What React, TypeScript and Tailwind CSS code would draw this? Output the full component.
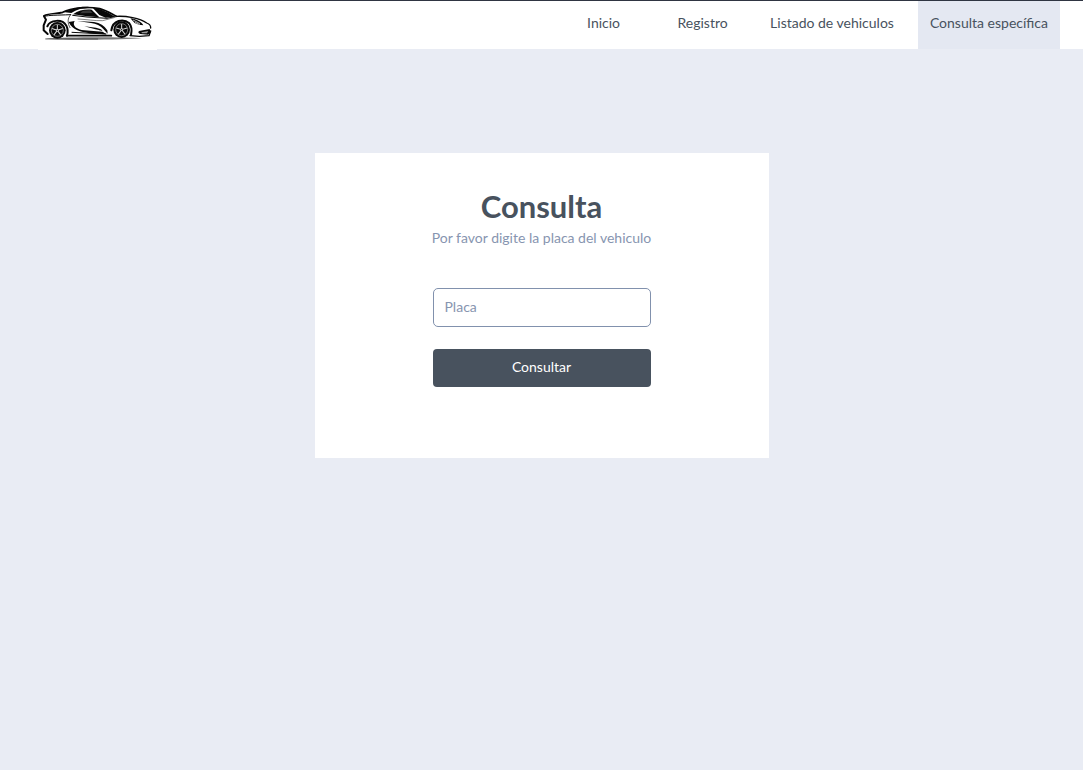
import React from "react";

const links = [
  { label: "Inicio", href: "#inicio" },
  { label: "Registro", href: "#registro" },
  { label: "Listado de vehiculos", href: "#listado" },
  { label: "Consulta específica", href: "#consulta", active: true },
];

function Wheel({ cx, cy }: { cx: number; cy: number }) {
  return (
    <g transform={`translate(${cx} ${cy})`}>
      <circle r="25" fill="#080808" />
      <circle r="18" fill="none" stroke="#a8a8a8" strokeWidth="2" />
      {[0, 72, 144, 216, 288].map((angle) => (
        <path
          key={angle}
          d="M0 -3 L0 -17"
          stroke="#dedede"
          strokeWidth="3"
          transform={`rotate(${angle})`}
        />
      ))}
      <circle r="4" fill="#ededed" />
      <circle r="2" fill="#080808" />
    </g>
  );
}

function CarLogo() {
  return (
    <svg viewBox="0 0 357 147" className="block w-[119px]" role="img" aria-label="Automóvil">
      <rect width="357" height="147" fill="#fff" />
      <path d="M20 113 C90 108 260 108 312 112 C260 117 80 118 20 113Z" fill="#777" />
      <path d="M22 114 H180" stroke="#333" strokeWidth="2" />
      <g fill="none" stroke="#080808" strokeLinecap="round" strokeLinejoin="round">
        <path d="M18 44 C34 36 56 39 74 34 C100 20 150 16 185 23 C207 29 221 39 235 46" strokeWidth="5" />
        <path d="M235 46 C264 44 306 52 326 66 Q339 71 338 81" strokeWidth="4" />
        <path d="M19 46 C36 42 52 43 98 41" strokeWidth="3" />
        <path d="M18 46 L24 56 L17 73 L17 88 L29 99" strokeWidth="6" />
        <path d="M28 76 C36 56 73 53 85 74 Q92 88 87 104" strokeWidth="6" />
        <path d="M98 41 C88 52 88 66 96 80" strokeWidth="2" />
        <path d="M120 54 C144 55 171 60 194 59 L232 49" strokeWidth="1.5" />
        <path d="M86 104 L220 104" strokeWidth="5" />
        <path d="M102 94 L204 99" strokeWidth="3" />
        <path d="M220 88 C224 57 256 51 274 67 Q284 79 279 102" strokeWidth="6" />
        <path d="M276 104 L304 106 L333 104 L338 90" strokeWidth="4" />
        <path d="M104 43 L147 48 L207 52 L229 47" strokeWidth="3" />
      </g>
      <path d="M74 33 L108 23 C125 17 149 16 164 20 L128 23 L112 29 L100 36 Z" fill="#080808" />
      <path d="M105 40 C122 27 143 24 161 26 L184 49 L147 46 Z" fill="#080808" />
      <path d="M164 20 C191 22 213 37 232 47 L203 50 L184 42Z" fill="#080808" />
      <path d="M126 37 L135 29 L156 28 L164 36Z" fill="#363636" />
      <path d="M92 63 L110 60 C101 74 116 86 139 88 L194 92 L205 100 C164 99 139 96 118 88 Q100 80 92 63Z" fill="#080808" />
      <path d="M118 60 L168 63 Q195 67 208 88 L209 98 L196 84 Q183 69 159 66Z" fill="#080808" />
      <path d="M139 76 L174 80 Q188 82 197 90 L172 85Z" fill="#080808" />
      <path d="M277 52 C293 54 309 61 316 73 Q302 73 290 66 Z" fill="#080808" />
      <path d="M285 57 L306 68 M291 64 L305 71" stroke="#fff" strokeWidth="2" />
      <path d="M303 90 L335 84 L338 94 L330 101 L307 99 Q298 96 303 90Z" fill="#080808" />
      <path d="M310 94 L331 90 L327 97 L312 97Z" fill="#999" />
      <Wheel cx={58} cy={88} />
      <Wheel cx={251} cy={86} />
    </svg>
  );
}

export default function App() {
  return (
    <div className="min-h-screen bg-[#e9ecf4] font-['Lato',sans-serif] text-sm text-[#48525e]">
      <header className="flex h-[49px] items-start justify-between border-t border-[#2f3542] bg-white pr-[23px] pl-[38px]">
        <a href="#inicio" className="shrink-0">
          <CarLogo />
        </a>
        <nav className="flex h-full gap-3">
          {links.map((link) => (
            <a
              key={link.label}
              href={link.href}
              aria-current={link.active ? "page" : undefined}
              className={`flex h-full min-w-[87px] items-center justify-center px-3 pb-1 whitespace-nowrap ${
                link.active ? "bg-[#e4e8f2]" : ""
              }`}
            >
              {link.label}
            </a>
          ))}
        </nav>
      </header>

      <main className="px-4 pt-26">
        <form
          className="mx-auto flex max-w-[454px] flex-col items-center bg-white pt-8 pb-[71px]"
          onSubmit={(event) => event.preventDefault()}
        >
          <h1 className="text-[31px] leading-[42px] font-bold">Consulta</h1>
          <p className="leading-[22px] text-[#8795b0]">Por favor digite la placa del vehiculo</p>
          <input
            type="text"
            name="placa"
            aria-label="Placa"
            placeholder="Placa"
            className="mt-[39px] h-[39px] w-[218px] rounded-[5px] border border-[#8191ad] bg-white px-[11px] pb-0.5 outline-none placeholder:text-[#8795b0]"
          />
          <button
            type="submit"
            className="mt-[22px] h-[38px] w-[218px] cursor-pointer rounded bg-[#48525e] pb-0.5 text-white"
          >
            Consultar
          </button>
        </form>
      </main>
    </div>
  );
}
